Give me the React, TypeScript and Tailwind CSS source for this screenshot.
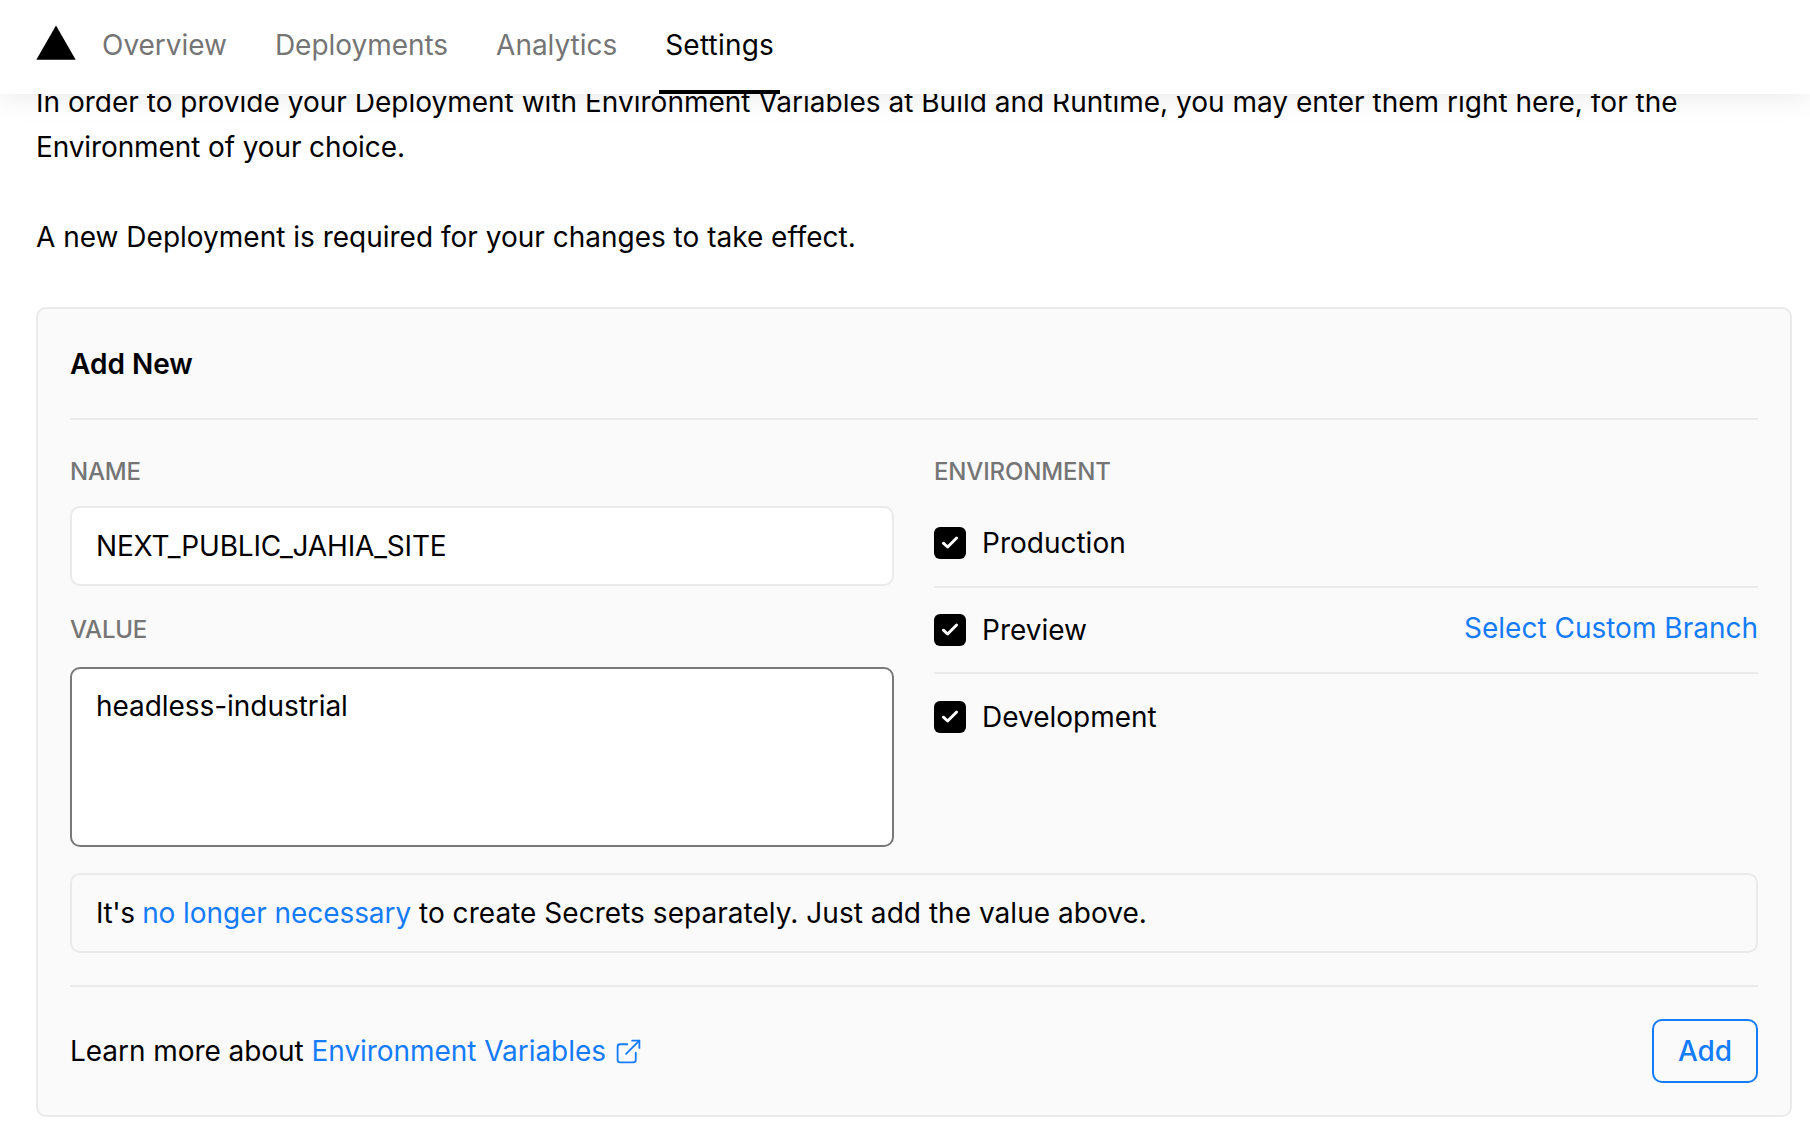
import React from "react";

const tabs = ["Overview", "Deployments", "Analytics", "Settings"];

function Check() {
  return (
    <span className="block size-8 shrink-0 rounded-[6px] bg-black">
      <svg viewBox="0 0 32 32" className="size-8" fill="none" stroke="#fff" strokeWidth="2.9" strokeLinecap="round" strokeLinejoin="round">
        <path d="M22.6 11 L13.6 20 L9.4 16.2" />
      </svg>
    </span>
  );
}

function EnvRow({ label }: { label: string }) {
  return (
    <div className="flex items-center gap-4">
      <Check />
      <span className="leading-8">{label}</span>
    </div>
  );
}

export default function App() {
  return (
    <div className="h-[1136px] overflow-hidden bg-white font-['Inter',sans-serif] text-[28px] leading-[45px] text-black">
      <header className="relative z-10 flex h-[94px] bg-white pl-9 shadow-[0_0_30px_0_rgba(0,0,0,0.1)]">
        <svg viewBox="0 0 40 36" className="mt-[25px] h-9 w-10">
          <path d="M20 0.5 L39.7 34.8 H0.3 Z" fill="#000" />
        </svg>
        <nav className="ml-5 flex gap-9">
          {tabs.map((t) => (
            <div
              key={t}
              className={
                t === "Settings"
                  ? "h-[94px] border-b-4 border-black px-1.5 leading-[90px] tracking-[0.2px]"
                  : "h-[94px] px-1.5 leading-[90px] tracking-[-0.03px] text-[#757575]"
              }
            >
              {t}
            </div>
          ))}
        </nav>
      </header>
      <main className="pl-9 pr-[18px]">
        <div className="-mt-[14px] pr-4">
          <p>
            <span className="tracking-[0.008px]">
              In order to provide your Deployment with Environment Variables at Build and Runtime, you may enter them right here, for the
            </span>{" "}
            <span className="tracking-[-0.11px]">Environment of your choice.</span>
          </p>
          <p className="mt-[45px]">A new Deployment is required for your changes to take effect.</p>
        </div>
        <section className="mt-[47px] h-[810px] rounded-[10px] border-2 border-[#eaeaea] bg-[#fafafa] px-8">
          <h2 className="h-[109px] pt-[33px] font-semibold">Add New</h2>
          <div className="h-0.5 bg-[#eaeaea]" />
          <div className="grid grid-cols-2 gap-10">
            <div>
              <div className="mt-[33px] text-2xl leading-[38px] font-medium tracking-[-0.2px] text-[#757575]">NAME</div>
              <div className="mt-[15px] h-20 rounded-[10px] border-2 border-[#eaeaea] bg-white px-6 leading-[76px] tracking-[-0.17px]">NEXT_PUBLIC_JAHIA_SITE</div>
              <div className="mt-[25px] text-2xl leading-[38px] font-medium tracking-[-0.2px] text-[#757575]">VALUE</div>
              <div className="mt-[18px] h-[180px] rounded-[10px] border-2 border-[#787878] bg-white px-6 pt-[15px] tracking-[-0.05px]">headless-industrial</div>
            </div>
            <div>
              <div className="mt-[33px] text-2xl leading-[38px] font-medium tracking-[-0.15px] text-[#757575]">ENVIRONMENT</div>
              <div className="mt-9 h-[61px] border-b-2 border-[#eaeaea]">
                <EnvRow label="Production" />
              </div>
              <div className="flex h-[86px] items-start justify-between border-b-2 border-[#eaeaea] pt-[26px]">
                <EnvRow label="Preview" />
                <a className="-mt-0.5 leading-8 text-[#147cfb]">Select Custom Branch</a>
              </div>
              <div className="pt-[27px]">
                <EnvRow label="Development" />
              </div>
            </div>
          </div>
          <div className="mt-[26px] h-20 rounded-[10px] border-2 border-[#eaeaea] px-6 leading-[76px]">
            <span className="tracking-[-0.4px]">It's </span>
            <a className="tracking-[-0.08px] text-[#147cfb]">no longer necessary</a>
            <span className="tracking-[0.035px]"> to create Secrets separately. Just add the value above.</span>
          </div>
          <div className="mt-8 h-0.5 bg-[#eaeaea]" />
          <div className="mt-8 flex h-16 items-center justify-between">
            <div className="flex items-center">
              <span className="tracking-[-0.05px]">
                Learn more about <a className="text-[#147cfb]">Environment Variables</a>
              </span>
              <svg viewBox="0 0 24 24" className="ml-2 size-[29px] text-[#147cfb]" fill="none" stroke="currentColor" strokeWidth="1.5" strokeLinecap="round" strokeLinejoin="round">
                <path d="M18 13v6a2 2 0 01-2 2H5a2 2 0 01-2-2V8a2 2 0 012-2h6" />
                <path d="M15 3h6v6" />
                <path d="M10 14L21 3" />
              </svg>
            </div>
            <button className="h-16 w-[106px] rounded-[10px] border-2 border-[#147cfb] font-medium text-[#147cfb]">Add</button>
          </div>
        </section>
      </main>
    </div>
  );
}
